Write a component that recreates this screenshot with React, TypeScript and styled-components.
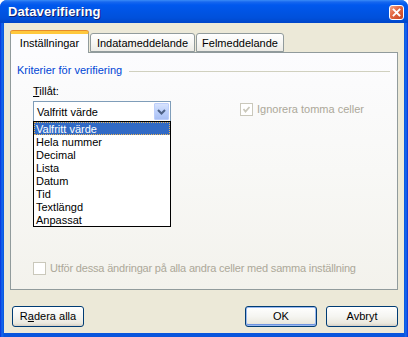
import React from 'react';
import styled, { createGlobalStyle } from 'styled-components';

const GlobalStyle = createGlobalStyle`
  html, body {
    margin: 0;
    padding: 0;
    background: #fff;
  }
  body {
    font-family: 'Liberation Sans', Arial, sans-serif;
    font-size: 11px;
    color: #000;
  }
`;

const Window = styled.div`
  width: 408px;
  height: 337px;
  display: flex;
  flex-direction: column;
  background: linear-gradient(to right, #0831d9 0px, #166aee 2px, #0855dd 4px, #0855dd 404px, #166aee 406px, #0831d9 408px);
  border-radius: 7px 7px 0 0;
  overflow: hidden;
`;

const TitleBar = styled.div`
  height: 23px;
  flex: none;
  display: flex;
  align-items: center;
  justify-content: space-between;
  padding: 0 4px 0 8px;
  background: linear-gradient(
    to bottom,
    #3a8cf7 0px,
    #1667ef 2px,
    #0058ee 5px,
    #0054e3 12px,
    #0050db 18px,
    #0045c8 23px
  );
`;

const Title = styled.span`
  color: #fff;
  font-weight: bold;
  font-size: 13px;
  letter-spacing: 0.1px;
  text-shadow: 1px 1px 0 #0f1e6e;
`;

const CloseButton = styled.div`
  width: 15px;
  height: 15px;
  margin-top: 1px;
  box-sizing: border-box;
  border: 1px solid #fff;
  border-radius: 3px;
  background: linear-gradient(135deg, #f2a48a 0%, #e36a45 40%, #c6411e 100%);
  display: flex;
  align-items: center;
  justify-content: center;
`;

const Body = styled.div`
  flex: 1;
  display: flex;
  flex-direction: column;
  margin: 0 4px 4px;
  padding: 8px 6px 6px;
  background: #ece9d8;
`;

const TabRow = styled.div`
  display: flex;
  align-items: flex-end;
  gap: 1px;
  height: 21px;
`;

const Tab = styled.div<{ $active?: boolean; $w: number }>`
  position: relative;
  box-sizing: border-box;
  width: ${({ $w }) => $w}px;
  height: ${({ $active }) => ($active ? 22 : 19)}px;
  margin-bottom: ${({ $active }) => ($active ? -1 : 0)}px;
  z-index: ${({ $active }) => ($active ? 2 : 1)};
  border: 1px solid #919b9c;
  border-bottom: ${({ $active }) => ($active ? 'none' : '1px solid #919b9c')};
  border-top: ${({ $active }) => ($active ? '3px solid #ffc83c' : '1px solid #919b9c')};
  border-radius: 3px 3px 0 0;
  background: ${({ $active }) =>
    $active ? '#fcfcfe' : 'linear-gradient(to bottom, #ffffff 0%, #f7f7f4 50%, #ecebe5 100%)'};
  box-shadow: ${({ $active }) => ($active ? '0 -1px 0 #e68b2c' : 'none')};
  padding-top: 3px;
  text-align: center;
  line-height: 13px;
  white-space: nowrap;
`;

const Panel = styled.div`
  height: 238px;
  box-sizing: border-box;
  border: 1px solid #919b9c;
  background: linear-gradient(to bottom, #fcfcfe 0%, #f8f8f6 50%, #f3f2ec 100%);
  padding: 11px 7px 14px 6px;
  display: flex;
  flex-direction: column;
`;

const GroupHeader = styled.div`
  display: flex;
  align-items: center;
  height: 13px;
  line-height: 13px;
  color: #0046d5;
`;

const GroupLine = styled.div`
  flex: 1;
  height: 1px;
  margin: 2px 0 0 7px;
  background: #d0d0bf;
`;

const GroupBody = styled.div`
  padding-left: 16px;
  display: flex;
  flex-direction: column;
`;

const FieldLabel = styled.div`
  margin-top: 8px;
  line-height: 13px;
  u {
    text-decoration: underline;
  }
`;

const ComboRow = styled.div`
  margin-top: 3px;
  display: flex;
  align-items: flex-start;
`;

const Combo = styled.div`
  position: relative;
  width: 138px;
  height: 21px;
  box-sizing: border-box;
  border: 1px solid #7f9db9;
  background: #fff;
  display: flex;
  align-items: center;
  justify-content: space-between;
  padding: 0 1px 0 3px;
`;

const ComboButton = styled.div`
  width: 15px;
  height: 17px;
  box-sizing: border-box;
  border: 1px solid #bccefb;
  border-radius: 1px;
  background: linear-gradient(to bottom, #d7e3fd 0%, #bcd0fb 50%, #a9c0f4 100%);
  display: flex;
  align-items: center;
  justify-content: center;
`;

const DropList = styled.div`
  position: absolute;
  top: 100%;
  left: -1px;
  width: 138px;
  box-sizing: border-box;
  border: 1px solid #000;
  background: #fff;
  z-index: 5;
`;

const ListItem = styled.div<{ $selected?: boolean }>`
  height: 13px;
  line-height: 14px;
  box-sizing: border-box;
  padding-left: 2px;
  color: ${({ $selected }) => ($selected ? '#fff' : '#000')};
  background: ${({ $selected }) => ($selected ? '#316ac5' : 'transparent')};
  outline: ${({ $selected }) => ($selected ? '1px dotted #e9b45a' : 'none')};
  outline-offset: -1px;
  white-space: nowrap;
`;

const CheckRow = styled.div<{ $left?: number; $tight?: boolean }>`
  display: flex;
  align-items: center;
  gap: 4px;
  margin-left: ${({ $left }) => $left ?? 0}px;
  margin-top: 2px;
  color: #aca899;
  line-height: 13px;
  white-space: nowrap;
  letter-spacing: ${({ $tight }) => ($tight ? '-0.18px' : '0')};
`;

const CheckBox = styled.div`
  width: 13px;
  height: 13px;
  box-sizing: border-box;
  border: 1px solid #cac8bb;
  background: #fff;
  display: flex;
  align-items: center;
  justify-content: center;
  flex: none;
`;

const Spacer = styled.div`
  flex: 1;
`;

const BottomCheck = styled.div`
  padding-left: 16px;
`;

const ButtonRow = styled.div`
  margin-top: 16px;
  display: flex;
  align-items: center;
  padding-left: 2px;
  gap: 9px;
`;

const Button = styled.div<{ $default?: boolean }>`
  width: 72px;
  height: 21px;
  box-sizing: border-box;
  border: 1px solid #003c74;
  border-radius: 3px;
  background: linear-gradient(to bottom, #ffffff 0%, #f5f5f1 50%, #ebe9df 85%, #d6d0c5 100%);
  box-shadow: ${({ $default }) =>
    $default ? 'inset 0 0 0 1px #9ab9ef, inset 0 -1px 0 1px #6e94e0' : 'none'};
  display: flex;
  align-items: center;
  justify-content: center;
  line-height: 13px;
  u {
    text-decoration: underline;
  }
`;

const tabs = [
  { label: 'Inställningar', w: 79, active: true },
  { label: 'Indatameddelande', w: 105 },
  { label: 'Felmeddelande', w: 88 },
];

const options = ['Valfritt värde', 'Hela nummer', 'Decimal', 'Lista', 'Datum', 'Tid', 'Textlängd', 'Anpassat'];

export default function App() {
  return (
    <>
      <GlobalStyle />
      <Window>
        <TitleBar>
          <Title>Dataverifiering</Title>
          <CloseButton>
            <svg width="9" height="9" viewBox="0 0 9 9">
              <path d="M1.5 1.5 L7.5 7.5 M7.5 1.5 L1.5 7.5" stroke="#fff" strokeWidth="1.8" strokeLinecap="square" />
            </svg>
          </CloseButton>
        </TitleBar>
        <Body>
          <TabRow>
            {tabs.map((t) => (
              <Tab key={t.label} $active={t.active} $w={t.w}>
                {t.label}
              </Tab>
            ))}
          </TabRow>
          <Panel>
            <GroupHeader>
              Kriterier för verifiering
              <GroupLine />
            </GroupHeader>
            <GroupBody>
              <FieldLabel>
                <u>T</u>illåt:
              </FieldLabel>
              <ComboRow>
                <Combo>
                  <span>Valfritt värde</span>
                  <ComboButton>
                    <svg width="9" height="6" viewBox="0 0 9 6">
                      <polyline points="1,1 4.5,4.5 8,1" fill="none" stroke="#4d6185" strokeWidth="2" />
                    </svg>
                  </ComboButton>
                  <DropList>
                    {options.map((o, i) => (
                      <ListItem key={o} $selected={i === 0}>
                        {o}
                      </ListItem>
                    ))}
                  </DropList>
                </Combo>
                <CheckRow $left={69}>
                  <CheckBox>
                    <svg width="9" height="9" viewBox="0 0 9 9">
                      <polyline points="1.5,4 3.5,6.5 7.5,2" fill="none" stroke="#cac8bb" strokeWidth="1.8" />
                    </svg>
                  </CheckBox>
                  Ignorera tomma celler
                </CheckRow>
              </ComboRow>
            </GroupBody>
            <Spacer />
            <BottomCheck>
              <CheckRow $tight>
                <CheckBox />
                Utför dessa ändringar på alla andra celler med samma inställning
              </CheckRow>
            </BottomCheck>
          </Panel>
          <ButtonRow>
            <Button>
              R<u>a</u>dera alla
            </Button>
            <Spacer />
            <Button $default>OK</Button>
            <Button>Avbryt</Button>
          </ButtonRow>
        </Body>
      </Window>
    </>
  );
}
